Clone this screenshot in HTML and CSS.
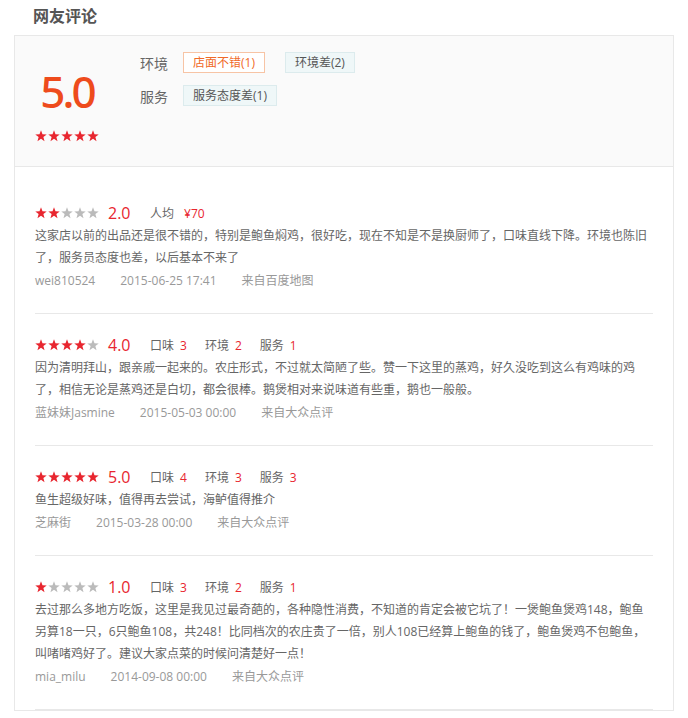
FILE: index.html
```html
<!DOCTYPE html>
<html lang="zh-CN">
<head>
    <meta charset="UTF-8">
    <meta name="viewport" content="width=device-width, initial-scale=1.0">
    <title>网友评论</title>
    <link rel="stylesheet" href="styles.css">
</head>
<body>
    <svg class="defs" width="0" height="0">
        <symbol id="star" viewBox="0 0 12 12">
            <polygon points="6,0.3 7.47,4.28 11.71,4.45 8.38,7.07 9.53,11.15 6,8.8 2.47,11.15 3.62,7.07 0.29,4.45 4.53,4.28"/>
        </symbol>
    </svg>

    <div class="comments">
        <h2 class="title">网友评论</h2>

        <div class="box">
            <div class="summary">
                <div class="total">
                    <div class="total-score">5.0</div>
                    <svg class="stars" viewBox="0 0 64 12">
                        <use href="#star" x="0" width="12" height="12" class="on"/>
                        <use href="#star" x="13" width="12" height="12" class="on"/>
                        <use href="#star" x="26" width="12" height="12" class="on"/>
                        <use href="#star" x="39" width="12" height="12" class="on"/>
                        <use href="#star" x="52" width="12" height="12" class="on"/>
                    </svg>
                </div>
                <div class="tags">
                    <div class="tag-row">
                        <span class="tag-label">环境</span>
                        <span class="tag good">店面不错(1)</span>
                        <span class="tag">环境差(2)</span>
                    </div>
                    <div class="tag-row">
                        <span class="tag-label">服务</span>
                        <span class="tag">服务态度差(1)</span>
                    </div>
                </div>
            </div>

            <ul class="reviews">
                <li class="review">
                    <div class="review-head">
                        <svg class="stars" viewBox="0 0 64 12">
                            <use href="#star" x="0" width="12" height="12" class="on"/>
                            <use href="#star" x="13" width="12" height="12" class="on"/>
                            <use href="#star" x="26" width="12" height="12"/>
                            <use href="#star" x="39" width="12" height="12"/>
                            <use href="#star" x="52" width="12" height="12"/>
                        </svg>
                        <span class="score">2.0</span>
                        <span class="item price">人均<em>¥70</em></span>
                    </div>
                    <p class="review-text">这家店以前的出品还是很不错的，特别是鲍鱼焖鸡，很好吃，现在不知是不是换厨师了，口味直线下降。环境也陈旧了，服务员态度也差，以后基本不来了</p>
                    <div class="meta">
                        <span>wei810524</span>
                        <span>2015-06-25 17:41</span>
                        <span>来自百度地图</span>
                    </div>
                </li>

                <li class="review">
                    <div class="review-head">
                        <svg class="stars" viewBox="0 0 64 12">
                            <use href="#star" x="0" width="12" height="12" class="on"/>
                            <use href="#star" x="13" width="12" height="12" class="on"/>
                            <use href="#star" x="26" width="12" height="12" class="on"/>
                            <use href="#star" x="39" width="12" height="12" class="on"/>
                            <use href="#star" x="52" width="12" height="12"/>
                        </svg>
                        <span class="score">4.0</span>
                        <span class="item">口味<em>3</em></span>
                        <span class="item">环境<em>2</em></span>
                        <span class="item">服务<em>1</em></span>
                    </div>
                    <p class="review-text">因为清明拜山，跟亲戚一起来的。农庄形式，不过就太简陋了些。赞一下这里的蒸鸡，好久没吃到这么有鸡味的鸡了，相信无论是蒸鸡还是白切，都会很棒。鹅煲相对来说味道有些重，鹅也一般般。</p>
                    <div class="meta">
                        <span>蓝妹妹Jasmine</span>
                        <span>2015-05-03 00:00</span>
                        <span>来自大众点评</span>
                    </div>
                </li>

                <li class="review">
                    <div class="review-head">
                        <svg class="stars" viewBox="0 0 64 12">
                            <use href="#star" x="0" width="12" height="12" class="on"/>
                            <use href="#star" x="13" width="12" height="12" class="on"/>
                            <use href="#star" x="26" width="12" height="12" class="on"/>
                            <use href="#star" x="39" width="12" height="12" class="on"/>
                            <use href="#star" x="52" width="12" height="12" class="on"/>
                        </svg>
                        <span class="score">5.0</span>
                        <span class="item">口味<em>4</em></span>
                        <span class="item">环境<em>3</em></span>
                        <span class="item">服务<em>3</em></span>
                    </div>
                    <p class="review-text">鱼生超级好味，值得再去尝试，海鲈值得推介</p>
                    <div class="meta">
                        <span>芝麻街</span>
                        <span>2015-03-28 00:00</span>
                        <span>来自大众点评</span>
                    </div>
                </li>

                <li class="review">
                    <div class="review-head">
                        <svg class="stars" viewBox="0 0 64 12">
                            <use href="#star" x="0" width="12" height="12" class="on"/>
                            <use href="#star" x="13" width="12" height="12"/>
                            <use href="#star" x="26" width="12" height="12"/>
                            <use href="#star" x="39" width="12" height="12"/>
                            <use href="#star" x="52" width="12" height="12"/>
                        </svg>
                        <span class="score">1.0</span>
                        <span class="item">口味<em>3</em></span>
                        <span class="item">环境<em>2</em></span>
                        <span class="item">服务<em>1</em></span>
                    </div>
                    <p class="review-text">去过那么多地方吃饭，这里是我见过最奇葩的，各种隐性消费，不知道的肯定会被它坑了！一煲鲍鱼煲鸡148，鲍鱼另算18一只，6只鲍鱼108，共248！比同档次的农庄贵了一倍，别人108已经算上鲍鱼的钱了，鲍鱼煲鸡不包鲍鱼，叫啫啫鸡好了。建议大家点菜的时候问清楚好一点！</p>
                    <div class="meta">
                        <span>mia_milu</span>
                        <span>2014-09-08 00:00</span>
                        <span>来自大众点评</span>
                    </div>
                </li>
            </ul>
        </div>
    </div>
</body>
</html>
```

FILE: styles.css
```css
body {
    margin: 0;
    font-family: "Open Sans", "Noto Sans CJK SC", sans-serif;
    font-size: 12px;
    color: #666;
    background-color: #fff;
}
.defs {
    position: absolute;
}
.comments {
    width: 660px;
    margin-left: 14px;
}
.title {
    margin: 0;
    height: 35px;
    line-height: 32px;
    padding-left: 19px;
    font-size: 16px;
    font-weight: bold;
    color: #555;
}
.box {
    border: 1px solid #e8e8e8;
}
.summary {
    display: flex;
    height: 130px;
    background-color: #fafafa;
    border-bottom: 1px solid #e8e8e8;
}
.total {
    width: 104px;
    text-align: center;
    padding-top: 30px;
}
.total-score {
    font-family: "Noto Sans", "Liberation Sans", sans-serif;
    font-size: 44px;
    line-height: 50px;
    font-weight: 500;
    letter-spacing: -3px;
    color: #ee4b1c;
}
.total .stars {
    margin-top: 14px;
}
.stars {
    display: block;
    width: 64px;
    height: 12px;
    fill: #bbb;
}
.total .stars {
    margin-left: auto;
    margin-right: auto;
}
.stars .on {
    fill: #e8262f;
}
.tags {
    margin-left: 21px;
    padding-top: 16px;
}
.tag-row {
    display: flex;
    align-items: center;
    gap: 20px;
    height: 21px;
    margin-bottom: 12px;
}
.tag-label {
    font-size: 14px;
    color: #666;
    margin-right: -5px;
}
.tag {
    height: 19px;
    line-height: 19px;
    padding: 0 9px;
    border: 1px solid #dcebed;
    background-color: #eff7f8;
    color: #555;
}
.tag.good {
    border-color: #f7c4a5;
    background-color: #fff;
    color: #f06a28;
}
.reviews {
    list-style: none;
    margin: 0;
    padding: 15px 20px 0;
}
.review {
    padding: 21px 0 21px;
    border-bottom: 1px solid #e8e8e8;
}
.review-head {
    display: flex;
    align-items: center;
    height: 20px;
}
.review-head .stars {
    margin-top: -1px;
}
.score {
    width: 42px;
    margin-left: 9px;
    font-size: 16px;
    color: #e8262f;
}
.item {
    margin-right: 18px;
}
.item em {
    font-style: normal;
    color: #e8262f;
    margin-left: 6px;
}
.price em {
    margin-left: 10px;
}
.review-text {
    margin: 2px 0 0;
    line-height: 22px;
}
.meta {
    display: flex;
    gap: 25px;
    margin-top: 1px;
    line-height: 22px;
    color: #999;
}
```
